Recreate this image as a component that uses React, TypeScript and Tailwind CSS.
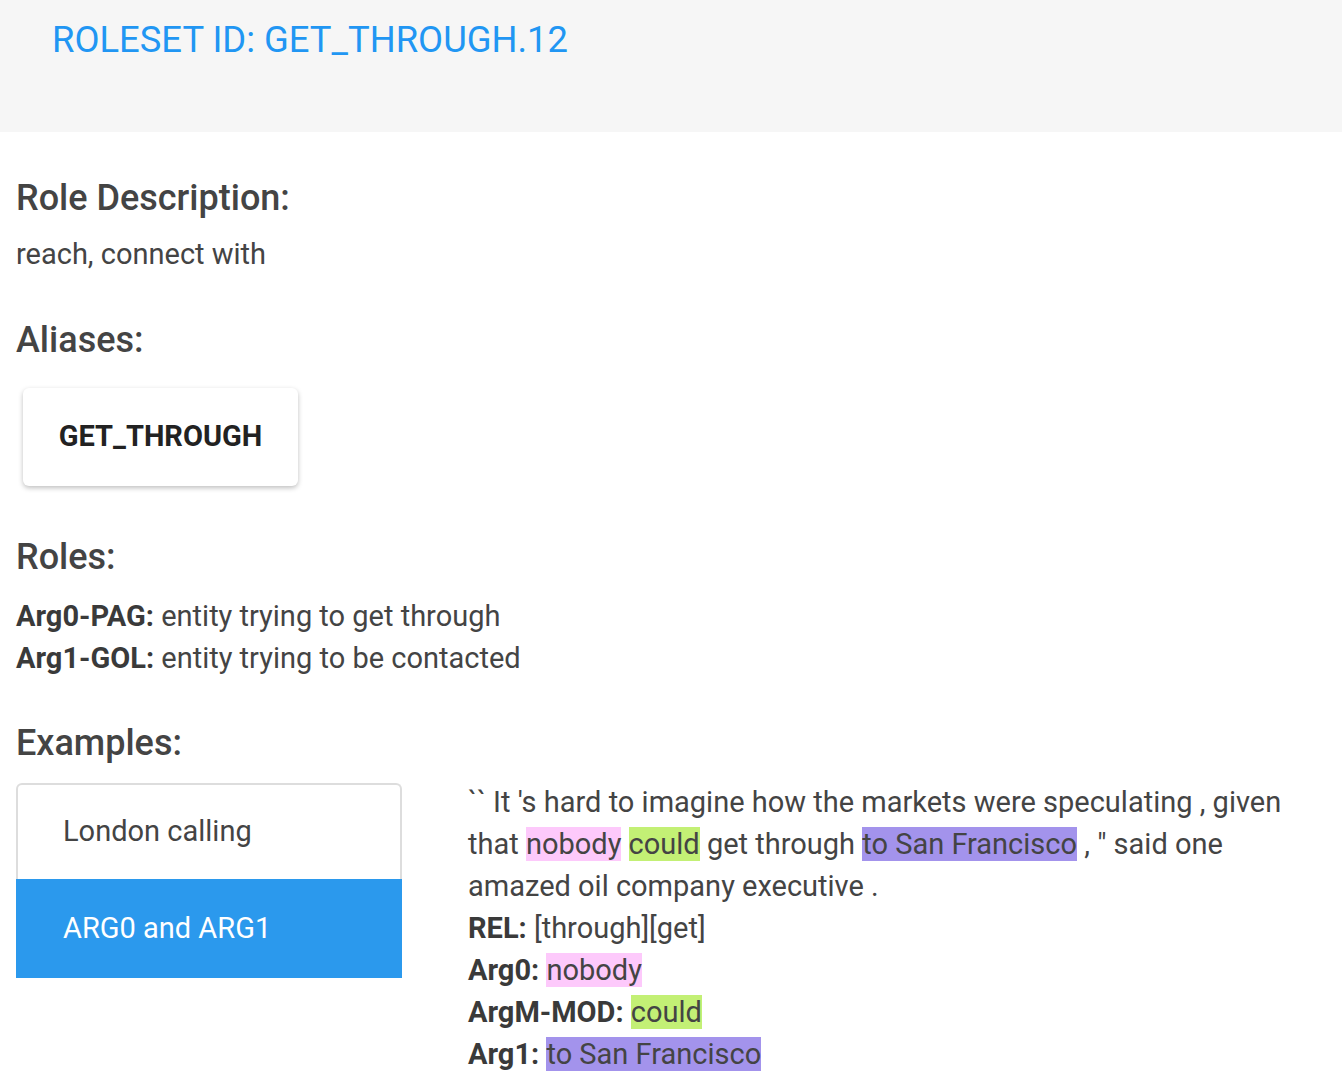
import React from "react";

const H = ({ children, className = "" }: { children: React.ReactNode; className?: string }) => (
  <h2 className={`text-[36px] leading-[42px] font-medium text-[#444444] ${className}`}>{children}</h2>
);

export default function App() {
  return (
    <div className="min-h-screen bg-white text-[#444444]" style={{ fontFamily: "Roboto, 'Noto Sans', sans-serif" }}>
      <header className="h-[132px] bg-[#f6f6f6] pl-[52px] pt-[18px]">
        <h1 className="text-[36.4px] leading-[44px] text-[#2196f3]">ROLESET ID: GET_THROUGH.12</h1>
      </header>
      <main className="px-[16px]">
        <H className="mt-[45px]">Role Description:</H>
        <p className="mt-[14px] text-[29px] leading-[42px]">reach, connect with</p>

        <H className="mt-[44px]">Aliases:</H>
        <div className="mt-[27px] ml-[7px] flex h-[98px] w-[275px] items-center justify-center rounded-[6px] bg-white shadow-[0_2px_5px_rgba(0,0,0,0.25)]">
          <span className="text-[29px] font-bold text-[#222222]">GET_THROUGH</span>
        </div>

        <H className="mt-[50px]">Roles:</H>
        <div className="mt-[17px] text-[29px] leading-[42px]">
          <div>
            <b className="font-bold text-[#3a3a3a]">Arg0-PAG:</b> entity trying to get through
          </div>
          <div>
            <b className="font-bold text-[#3a3a3a]">Arg1-GOL:</b> entity trying to be contacted
          </div>
        </div>

        <H className="mt-[43px]">Examples:</H>
        <div className="mt-[17px] flex gap-[66px]">
          <div className="mt-[2px] w-[386px] shrink-0">
            <div className="flex h-[96px] items-center rounded-t-[6px] border-x-2 border-t-2 border-[#dddddd] bg-white pl-[45px] text-[29px]">
              London calling
            </div>
            <div className="flex h-[99px] items-center bg-[#2b99ed] pl-[47px] text-[29px] text-white">
              ARG0 and ARG1
            </div>
          </div>
          <div className="flex-1 text-[29px] leading-[42px]">
            <p>
              `` It 's hard to imagine how the markets were speculating , given that{" "}
              <span className="bg-[#fdc9fb]">nobody</span> <span className="bg-[#c3f075]">could</span> get through{" "}
              <span className="bg-[#a393ec]">to San Francisco</span> , " said one amazed oil company executive .
            </p>
            <div>
              <b className="font-bold text-[#3a3a3a]">REL:</b> [through][get]
            </div>
            <div>
              <b className="font-bold text-[#3a3a3a]">Arg0:</b> <span className="bg-[#fdc9fb]">nobody</span>
            </div>
            <div>
              <b className="font-bold text-[#3a3a3a]">ArgM-MOD:</b> <span className="bg-[#c3f075]">could</span>
            </div>
            <div>
              <b className="font-bold text-[#3a3a3a]">Arg1:</b> <span className="bg-[#a393ec]">to San Francisco</span>
            </div>
          </div>
        </div>
      </main>
    </div>
  );
}
